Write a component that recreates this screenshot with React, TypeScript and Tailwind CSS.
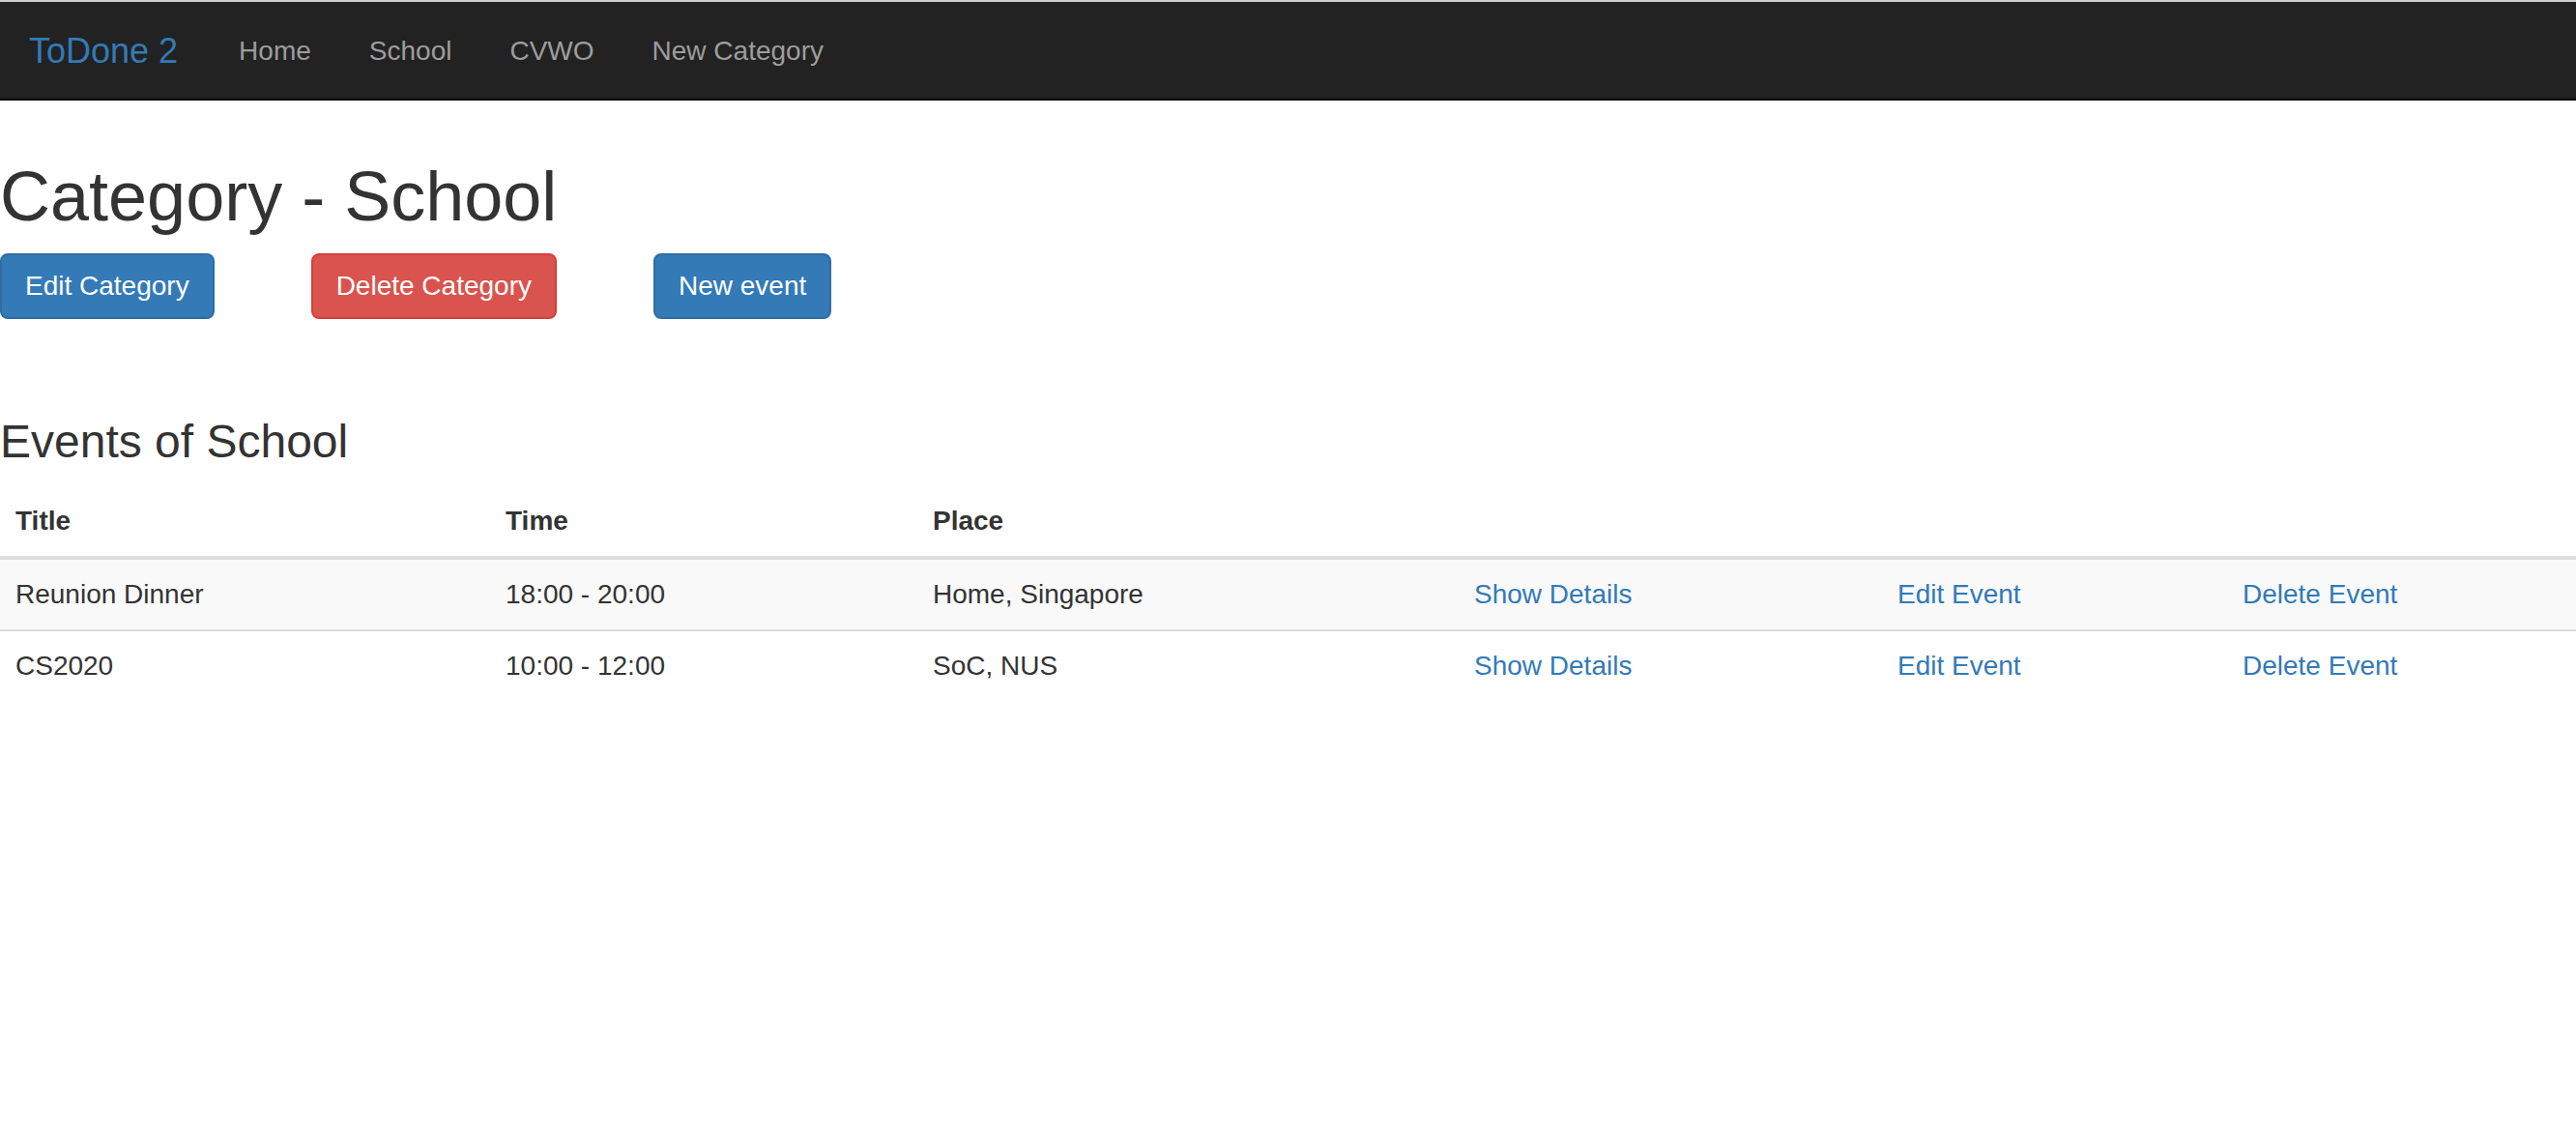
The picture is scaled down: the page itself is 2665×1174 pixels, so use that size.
import React from "react";

const navLinks = ["Home", "School", "CVWO", "New Category"];

const events = [
  { title: "Reunion Dinner", time: "18:00 - 20:00", place: "Home, Singapore" },
  { title: "CS2020", time: "10:00 - 12:00", place: "SoC, NUS" },
];

export default function App() {
  return (
    <div className="min-h-screen bg-white font-['Liberation_Sans',Arial,sans-serif] text-[28px] leading-[40px] text-[#333]">
      <div className="h-[2px] bg-[#cfcfcf]" />
      <nav className="flex h-[102px] items-start border-b-2 border-[#080808] bg-[#222]">
        <a href="#" className="block pt-[31px] pb-[29px] pl-[30px] pr-[33px] text-[36px] leading-[40px] text-[#337ab7]">
          ToDone 2
        </a>
        <ul className="flex">
          {navLinks.map((l) => (
            <li key={l}>
              <a href="#" className="block px-[30px] pt-[31px] pb-[29px] leading-[40px] text-[#9d9d9d]">
                {l}
              </a>
            </li>
          ))}
        </ul>
      </nav>

      <main>
        <h1 className="mt-[60px] mb-[19px] text-[72px] leading-[79px] font-normal">Category - School</h1>
        <div className="flex gap-[100px]">
          <button className="h-[68px] rounded-[8px] border-2 border-[#2e6da4] bg-[#337ab7] px-[24px] text-[28px] leading-[40px] text-white">
            Edit Category
          </button>
          <button className="h-[68px] rounded-[8px] border-2 border-[#d43f3a] bg-[#d9534f] px-[24px] text-[28px] leading-[40px] text-white">
            Delete Category
          </button>
          <button className="h-[68px] rounded-[8px] border-2 border-[#2e6da4] bg-[#337ab7] px-[24px] text-[28px] leading-[40px] text-white">
            New event
          </button>
        </div>

        <h3 className="mt-[100px] mb-[20px] text-[48px] leading-[53px] font-normal">Events of School</h3>

        <table className="w-full table-fixed border-separate border-spacing-0">
          <colgroup>
            <col className="w-[507px]" />
            <col className="w-[442px]" />
            <col className="w-[560px]" />
            <col className="w-[438px]" />
            <col className="w-[357px]" />
            <col className="w-[361px]" />
          </colgroup>
          <thead>
            <tr>
              <th className="border-b-4 border-[#ddd] p-[16px] text-left font-bold">Title</th>
              <th className="border-b-4 border-[#ddd] p-[16px] text-left font-bold">Time</th>
              <th className="border-b-4 border-[#ddd] p-[16px] text-left font-bold">Place</th>
              <th className="border-b-4 border-[#ddd] p-[16px]" />
              <th className="border-b-4 border-[#ddd] p-[16px]" />
              <th className="border-b-4 border-[#ddd] p-[16px]" />
            </tr>
          </thead>
          <tbody>
            {events.map((e, i) => {
              const cell =
                i === 0
                  ? "p-[16px] align-top"
                  : "p-[16px] align-top border-t-2 border-[#ddd]";
              return (
                <tr key={e.title} className={i === 0 ? "bg-[#f9f9f9]" : "bg-white"}>
                  <td className={cell}>{e.title}</td>
                  <td className={cell}>{e.time}</td>
                  <td className={cell}>{e.place}</td>
                  <td className={cell}>
                    <a href="#" className="text-[#337ab7]">Show Details</a>
                  </td>
                  <td className={cell}>
                    <a href="#" className="text-[#337ab7]">Edit Event</a>
                  </td>
                  <td className={cell}>
                    <a href="#" className="text-[#337ab7]">Delete Event</a>
                  </td>
                </tr>
              );
            })}
          </tbody>
        </table>
      </main>
    </div>
  );
}
